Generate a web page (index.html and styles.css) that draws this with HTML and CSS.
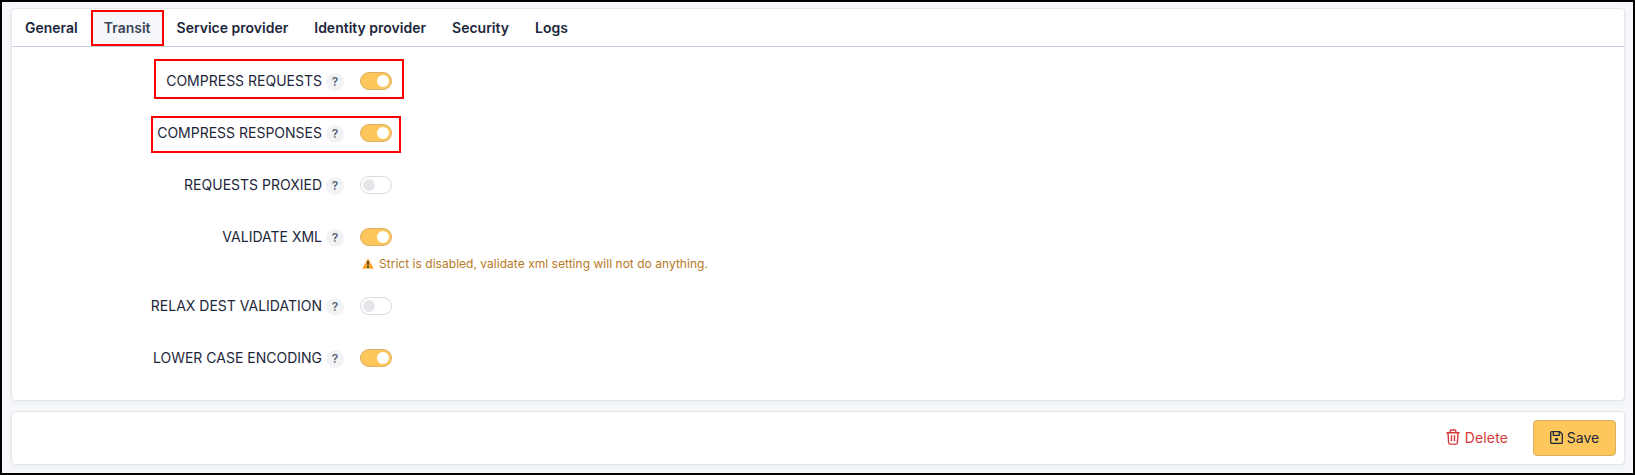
FILE: index.html
```html
<!DOCTYPE html>
<html lang="en">
<head>
<meta charset="utf-8">
<title>SAML configuration</title>
<link rel="stylesheet" href="styles.css">
</head>
<body>
<main class="page">
  <section class="card settings">
    <nav class="tabs">
      <a class="tab">General</a>
      <a class="tab active">Transit</a>
      <a class="tab">Service provider</a>
      <a class="tab">Identity provider</a>
      <a class="tab">Security</a>
      <a class="tab">Logs</a>
    </nav>
    <div class="rows">
      <div class="row"><label class="label">COMPRESS REQUESTS</label><span class="help">?</span><span class="switch on"></span><span class="mark mark-requests"></span></div>
      <div class="row"><label class="label">COMPRESS RESPONSES</label><span class="help">?</span><span class="switch on"></span><span class="mark mark-responses"></span></div>
      <div class="row"><label class="label">REQUESTS PROXIED</label><span class="help">?</span><span class="switch"></span></div>
      <div class="row"><label class="label">VALIDATE XML</label><span class="help">?</span><span class="switch on"></span></div>
      <div class="hint">
        <svg class="warn" viewBox="0 0 12 11"><path d="M6 .2 11.9 10.8H.1Z" fill="#fba834"/><path d="M5.1 3.2h1.8L6.5 7.6h-1Z" fill="#222"/><circle cx="6" cy="9" r=".9" fill="#222"/></svg>
        <span class="hint-text">Strict is disabled, validate xml setting will not do anything.</span>
      </div>
      <div class="row"><label class="label">RELAX DEST VALIDATION</label><span class="help">?</span><span class="switch"></span></div>
      <div class="row"><label class="label">LOWER CASE ENCODING</label><span class="help">?</span><span class="switch on"></span></div>
    </div>
  </section>
  <footer class="card actions">
    <a class="delete">
      <svg class="trash" viewBox="0 0 14 16" fill="none" stroke="currentColor" stroke-width="1.4"><path d="M.4 3.7h13.2M4.2 3.4V1.9q0-.9.9-.9h3.8q.9 0 .9.9v1.5M2 3.8l.6 9.7q.1 1.6 1.6 1.6h5.6q1.5 0 1.6-1.6l.6-9.7M5.5 6.3v6M8.5 6.3v6"/></svg>
      <span class="delete-text">Delete</span>
    </a>
    <button class="save">
      <svg class="disk" viewBox="0 0 13 13" fill="none" stroke="currentColor" stroke-width="1.3"><path d="M1.6.7h8.2l2.5 2.5v8.2q0 .9-.9.9H1.6q-.9 0-.9-.9V1.6q0-.9.9-.9ZM3.3.9v3.4h5.9V.9"/><circle cx="6.5" cy="8.3" r="1.6" fill="currentColor" stroke="none"/></svg>
      <span class="save-text">Save</span>
    </button>
  </footer>
</main>
</body>
</html>
```
FILE: styles.css
```css
* { box-sizing: border-box; }
body { margin: 0; font-family: Inter, "Liberation Sans", sans-serif; font-size: 14px; color: #1d273b; }
.page { width: 1635px; height: 475px; border: 2px solid #000; background: #f5f7fb; padding: 6px 8px 0 9px; display: flex; flex-direction: column; gap: 10px; }
.card { background: #fff; border: 1px solid #e4e6ea; border-radius: 4px; box-shadow: 0 2px 4px rgba(30, 41, 59, .04); }
.settings { height: 393px; }
.tabs { display: flex; height: 38px; border-bottom: 1px solid #c8d0e0; }
.tab { padding: 0 13px; line-height: 38px; font-weight: 600; white-space: nowrap; }
.tab.active { height: 36px; margin: 1px 0 0; padding: 0 11px; line-height: 32px; border: 2px solid #f00; background: #f5f7fb; color: #3b4658; }
.rows { padding-top: 8px; }
.row { position: relative; display: flex; align-items: center; height: 52px; }
.label { width: 310px; text-align: right; line-height: 20px; white-space: nowrap; }
.help { width: 18px; height: 18px; margin: 2px 16px 0 4px; border-radius: 50%; background: #f1f3f5; color: #5b6675; font-size: 12px; font-weight: 600; line-height: 18px; text-align: center; }
.switch { width: 32px; height: 18px; border: 1px solid #d8dade; border-radius: 9px; padding: 2px; display: flex; }
.switch::before { content: ""; width: 12px; height: 12px; border-radius: 50%; background: #e4e6e9; }
.switch.on { justify-content: flex-end; background: #fdc75c; border-color: #d9b063; }
.switch.on::before { background: #fff; }
.mark { position: absolute; border: 2px solid #f00; }
.mark-requests { left: 142px; top: 4px; width: 250px; height: 40px; }
.mark-responses { left: 139px; top: 9px; width: 250px; height: 37px; }
.hint { display: flex; align-items: center; gap: 5px; height: 17px; padding-left: 350px; color: #b7791f; font-size: 12px; line-height: 17px; margin: -8px 0 8px; }
.hint-text { letter-spacing: .03px; }
.warn { width: 12px; height: 11px; }
.actions { height: 54px; display: flex; align-items: center; justify-content: flex-end; padding-right: 8px; gap: 25px; }
.delete { display: flex; align-items: center; gap: 5px; color: #d63939; line-height: 18px; }
.delete-text { letter-spacing: .12px; }
.trash { width: 14px; height: 16px; margin-top: -3px; }
.save { display: flex; align-items: center; justify-content: center; gap: 4px; width: 83px; height: 36px; padding: 0 0 1px; border: 1px solid #d9b063; border-radius: 4px; background: #fdc75c; color: #1d273b; font: inherit; line-height: 18px; }
.disk { width: 13px; height: 13px; }
```
